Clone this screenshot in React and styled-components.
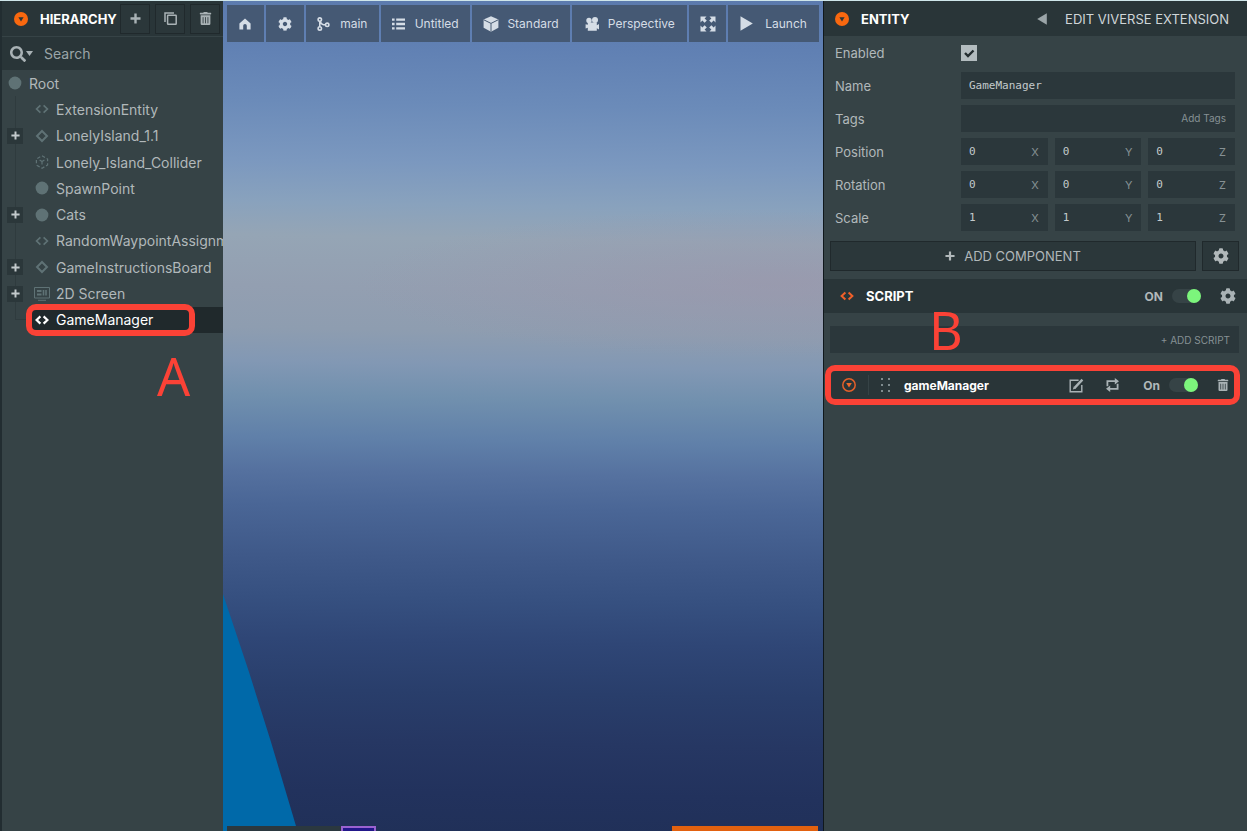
import React from 'react';
import styled, { createGlobalStyle } from 'styled-components';
import { FaCog, FaSearch, FaTrashAlt } from 'react-icons/fa';

const GlobalStyle = createGlobalStyle`
  * { box-sizing: border-box; }
  body {
    margin: 0;
    background: #364346;
    color: #b1b8ba;
    font-family: Inter, "Liberation Sans", sans-serif;
    font-size: 13px;
  }
  button, input {
    margin: 0;
    padding: 0;
    border: 0;
    background: none;
    color: inherit;
    font: inherit;
  }
  svg { display: block; flex: none; }
`;

const Editor = styled.div`
  display: grid;
  grid-template-columns: 223px minmax(0, 1fr) 424px;
  min-height: 100vh;
  border-top: 1px solid #cfe6ea;
  overflow: hidden;
`;

/* ---------- shared parts ---------- */

const PanelHeader = styled.header`
  display: flex;
  align-items: center;
  height: ${(p) => (p.$section ? '34px' : '35px')};
  padding: ${(p) => p.$pad};
  background: #293538;
`;

const Title = styled.h2`
  margin: 0 0 0 12px;
  color: #fff;
  font-size: 13px;
  font-weight: 700;
  line-height: 18px;
`;

const Spacer = styled.span`
  flex: 1;
`;

const IconButton = styled.button`
  display: flex;
  align-items: center;
  justify-content: center;
  color: #a9b2b5;
`;

const Callout = styled.div`
  position: absolute;
  top: ${(p) => p.$v};
  bottom: ${(p) => p.$v};
  left: ${(p) => p.$left};
  right: ${(p) => p.$right};
  border: 6px solid #fb4236;
  border-radius: 10px;
  pointer-events: none;
`;

const CalloutLetter = styled.span`
  position: absolute;
  left: ${(p) => p.$left};
  top: ${(p) => p.$top};
  color: #fb4236;
  font-family: "Noto Sans", sans-serif;
  font-size: 52px;
  line-height: 52px;
  pointer-events: none;
`;

/* ---------- icons ---------- */

const FoldIcon = () => (
  <svg width="14" height="14" viewBox="0 0 14 14">
    <circle cx="7" cy="7" r="7" fill="#f9680f" />
    <path d="M4.4 5.2h5.2L7 9.4z" fill="#293538" />
  </svg>
);

const FoldOutlineIcon = () => (
  <svg width="14" height="14" viewBox="0 0 14 14">
    <circle cx="7" cy="7" r="6.2" fill="none" stroke="#e4602a" strokeWidth="1.5" />
    <path d="M4.2 5.1h5.6L7 9.6z" fill="#f0682a" />
  </svg>
);

const PlusIcon = ({ size = 11 }) => (
  <svg width={size} height={size} viewBox="0 0 11 11">
    <path d="M5.5 0.5v10M0.5 5.5h10" stroke="currentColor" strokeWidth="2.4" />
  </svg>
);

const CopyIcon = () => (
  <svg width="13" height="13" viewBox="0 0 13 13" fill="none" stroke="currentColor" strokeWidth="1.5">
    <rect x="3.6" y="3.2" width="8.6" height="9" rx="0.5" />
    <path d="M1 10V1h9" />
  </svg>
);

const CodeIcon = ({ width = 14, stroke = 1.7 }) => (
  <svg width={width} height="10" viewBox="0 0 14 10" fill="none" stroke="currentColor" strokeWidth={stroke}>
    <path d="M5.4 1.4 1.6 5l3.8 3.6M8.6 1.4 12.4 5 8.6 8.6" />
  </svg>
);

const DiamondIcon = () => (
  <svg width="14" height="14" viewBox="0 0 14 14" fill="none" stroke="currentColor" strokeWidth="2">
    <path d="M7 2 12 7 7 12 2 7z" />
  </svg>
);

const DotIcon = () => (
  <svg width="14" height="14" viewBox="0 0 14 14">
    <circle cx="7" cy="7" r="6.4" fill="currentColor" />
  </svg>
);

const ColliderIcon = () => (
  <svg width="14" height="14" viewBox="0 0 14 14" fill="none" stroke="currentColor" strokeWidth="1.2">
    <path d="M7 0.8 12.6 4v6L7 13.2 1.4 10V4z" strokeDasharray="3.4 2" />
    <path d="M4.6 5 7 6.6 9.4 5M7 6.6v3" />
  </svg>
);

const ScreenIcon = () => (
  <svg width="16" height="14" viewBox="0 0 16 14" fill="none" stroke="currentColor">
    <path d="M0.5 0.5h15v10.5h-15zM4 13.3h8" />
    <path d="M3 4h4.500M3 7.500h4.500" strokeWidth="1.8" />
    <path d="M9.500 3v5.500M12 3v5.500" strokeWidth="1.6" />
  </svg>
);

const HomeIcon = () => (
  <svg width="12" height="12" viewBox="0 0 12 12">
    <path d="M6 0.4 11.6 5.6V11.4H7.8V7.8a1.8 1.8 0 0 0-3.6 0v3.6H0.4V5.6z" fill="currentColor" />
  </svg>
);

const BranchIcon = () => (
  <svg width="13" height="14" viewBox="0 0 13 14" fill="none" stroke="currentColor" strokeWidth="1.6">
    <circle cx="2.8" cy="2.6" r="1.7" />
    <circle cx="2.8" cy="11.4" r="1.7" />
    <circle cx="10.2" cy="7.8" r="1.7" />
    <path d="M2.8 4.3v5.4M3.2 4.4c.8 2.4 2.6 3.4 5.2 3.4" />
  </svg>
);

const ListIcon = () => (
  <svg width="13" height="12" viewBox="0 0 13 12" stroke="currentColor" strokeWidth="2.4">
    <path d="M0 1.6h2.6M4.2 1.6H13M0 6h2.6M4.2 6H13M0 10.4h2.6M4.2 10.4H13" />
  </svg>
);

const CubeIcon = () => (
  <svg width="16" height="16" viewBox="0 0 16 16">
    <path d="M8 0.3 15.4 3.6v8.2L8 15.8 0.6 11.8V3.6z" fill="currentColor" />
    <path d="M0.8 3.8 8 7.4l7.2-3.6M8 7.4v8.2" fill="none" stroke="#475a72" strokeWidth="1" />
  </svg>
);

const CameraIcon = () => (
  <svg width="15" height="14" viewBox="0 0 15 14" fill="currentColor">
    <circle cx="4" cy="3.4" r="2.7" />
    <circle cx="10" cy="3" r="3" />
    <path d="M2.8 5.6h9v2.6l2.2-1.2v5.4l-2.2-1.2v2.6H2.8V10.8L0.6 11.4V7.2l2.2.6z" />
  </svg>
);

const ExpandIcon = () => (
  <svg width="16" height="16" viewBox="0 0 16 16" fill="currentColor">
    <path d="M0.5 0.5h6L4.6 2.4l2.2 2.2-2.2 2.2-2.2-2.2L0.5 6.5zM15.5 0.5v6l-1.9-1.9-2.2 2.2-2.2-2.2 2.2-2.2L9.5 0.5zM0.5 15.5v-6l1.9 1.9 2.2-2.2 2.2 2.2-2.2 2.2 1.9 1.9zM15.5 15.5h-6l1.9-1.9-2.2-2.2 2.2-2.2 2.2 2.2 1.9-1.9z" />
  </svg>
);

const PlayIcon = () => (
  <svg width="13" height="15" viewBox="0 0 13 15">
    <path d="M0.5 0.3 12.8 7.5 0.5 14.7z" fill="currentColor" />
  </svg>
);

const BackIcon = () => (
  <svg width="10" height="12" viewBox="0 0 10 12">
    <path d="M9.8 0.3v11.4L0.2 6z" fill="currentColor" />
  </svg>
);

const CaretIcon = () => (
  <svg width="7" height="5" viewBox="0 0 7 5">
    <path d="M0 0h7L3.5 5z" fill="currentColor" />
  </svg>
);

const EditIcon = () => (
  <svg width="15" height="15" viewBox="0 0 15 15" fill="none" stroke="currentColor" strokeWidth="1.4">
    <path d="M9.6 2.2H1.2v11.6h11.6V7" />
    <path d="M5.6 9.8 13.4 1.6" strokeWidth="2.4" />
    <path d="M3.8 11.6 7 10.6 4.8 8.6z" fill="currentColor" stroke="none" />
  </svg>
);

const RefreshIcon = () => (
  <svg width="15" height="14" viewBox="0 0 15 14" fill="none" stroke="currentColor" strokeWidth="1.8">
    <path d="M2.4 8.2V3.2h8M12.6 5.8v5H4.6" />
    <path d="M9.8 0 14 3.2 9.8 6.4zM5.2 7.6 1 10.8l4.2 3.2z" fill="currentColor" stroke="none" />
  </svg>
);

const GripIcon = () => (
  <svg width="10" height="14" viewBox="0 0 10 14" fill="#7f8b8e">
    <path d="M0 0h2v2H0zM7 0h2v2H7zM0 6h2v2H0zM7 6h2v2H7zM0 12h2v2H0zM7 12h2v2H7z" />
  </svg>
);

/* ---------- hierarchy ---------- */

const Hierarchy = styled.aside`
  position: relative;
  display: flex;
  flex-direction: column;
  min-width: 0;
  overflow: hidden;
  border-left: 2px solid #222d31;
  background: #364346;
`;

const HeaderButtons = styled.div`
  display: flex;
  gap: 5px;
  margin-left: auto;
`;

const HeaderButton = styled(IconButton)`
  width: 30px;
  height: 30px;
  border: 1px solid #20292c;
  background: #2b373a;
`;

const SearchBar = styled.label`
  display: flex;
  align-items: center;
  height: 34px;
  padding: 0 8px;
  border-top: 1px solid #364346;
  background: #293538;
  color: #a9b2b5;

  input {
    flex: 1;
    min-width: 0;
    margin-left: 11px;
    outline: 0;
    font-size: 14px;
  }
  input::placeholder {
    color: #9ba5a8;
    opacity: 1;
  }
`;

const Tree = styled.ul`
  position: relative;
  display: grid;
  grid-template-columns: minmax(0, 1fr);
  grid-auto-rows: 1fr;
  height: 263px;
  margin: 0;
  padding: 0;
  list-style: none;

  &::before {
    content: "";
    position: absolute;
    top: 26px;
    bottom: 13px;
    left: 13px;
    width: 15px;
    border-left: 1px solid #2f3b3e;
    border-bottom: 1px solid #2f3b3e;
  }
`;

const TreeRow = styled.li`
  position: relative;
  display: flex;
  align-items: center;
  gap: 7px;
  padding-left: 5px;
  color: #b1b8ba;
  font-size: 14px;
  white-space: nowrap;
`;

const SelectedRow = styled(TreeRow)`
  margin-left: 28px;
  padding-left: 4px;
  background: #20292c;
  color: #fff;
`;

const NodeIcon = styled.span`
  display: flex;
  flex: none;
  justify-content: center;
  width: 15px;
  color: ${(p) => (p.$selected ? '#fff' : '#5f7275')};
`;

const ExpanderSlot = styled.span`
  flex: none;
  width: 20px;
`;

const Expander = styled(IconButton)`
  width: 16px;
  height: 16px;
  background: #2b373a;
  color: #c3cacc;
`;

const nodes = [
  { name: 'ExtensionEntity', icon: <CodeIcon /> },
  { name: 'LonelyIsland_1.1', icon: <DiamondIcon />, open: true },
  { name: 'Lonely_Island_Collider', icon: <ColliderIcon /> },
  { name: 'SpawnPoint', icon: <DotIcon /> },
  { name: 'Cats', icon: <DotIcon />, open: true },
  { name: 'RandomWaypointAssignment', icon: <CodeIcon /> },
  { name: 'GameInstructionsBoard', icon: <DiamondIcon />, open: true },
  { name: '2D Screen', icon: <ScreenIcon />, open: true },
];

/* ---------- viewport ---------- */

const Viewport = styled.main`
  position: relative;
  display: flex;
  flex-direction: column;
  justify-content: space-between;
  min-width: 0;
  overflow: hidden;
  background:
    radial-gradient(ellipse 70% 9% at 92% 34%, rgba(158, 148, 170, 0.5), transparent),
    linear-gradient(
      181deg,
      #5b7aad 0%, #6080b3 6%, #6b8bb9 13%, #7b98bf 20%, #89a2bd 25%,
      #95a5b5 29%, #939fb1 35%, #8e9db0 40%, #8298b4 44%, #7190ae 48%,
      #6080a9 53%, #55719f 57%, #4a6696 61%, #3f5989 67%, #365080 72%,
      #2f4676 77%, #293e6b 83%, #263763 89%, #22325d 95%, #203058 100%
    );
`;

const Toolbar = styled.nav`
  position: relative;
  display: flex;
  gap: 2px;
  padding: 4px;
`;

const ToolButton = styled.button`
  display: flex;
  flex: ${(p) => p.$w} 1 ${(p) => p.$w}px;
  align-items: center;
  justify-content: center;
  gap: ${(p) => p.$gap || 8}px;
  height: 37px;
  min-width: 0;
  background: #455974;
  color: #d5dde6;
  font-size: 12px;
  white-space: nowrap;
`;

const Ramp = styled.svg`
  position: absolute;
  left: 0;
  bottom: 0;
`;

const BottomEdge = styled.div`
  position: relative;
  display: flex;
  height: 5px;
  padding: 0 5px 0 4px;
`;

const BottomPanel = styled.span`
  width: 114px;
  background: #2b383f;
`;

const BottomTab = styled.span`
  width: 35px;
  border: 2px solid #9a62d0;
  border-bottom: 0;
  background: #22178a;
`;

const BottomAction = styled.span`
  width: 146px;
  margin-left: auto;
  background: #e2610f;
`;

/* ---------- inspector ---------- */

const Inspector = styled.aside`
  min-width: 0;
  border-left: 1px solid #10181c;
  background: #364346;
`;

const HeaderLink = styled.button`
  display: flex;
  align-items: center;
  gap: 18px;
  color: #d0d6d8;
  svg { color: #9ba5a8; }
`;

const Fields = styled.div`
  display: grid;
  gap: 6px;
  padding: 3px 12px 10px 11px;
`;

const FieldRow = styled.div`
  display: grid;
  grid-template-columns: 120px minmax(0, 1fr);
  column-gap: 6px;
  align-items: center;
  height: 27px;
`;

const Inputs = styled.div`
  display: flex;
  gap: 7px;
`;

const InputBox = styled.label`
  display: flex;
  flex: 1;
  align-items: center;
  min-width: 0;
  height: 27px;
  padding: 0 9px 0 8px;
  background: #2b373b;
  color: #869194;
  font-size: 11px;

  input {
    flex: 1;
    min-width: 0;
    width: 0;
    outline: 0;
    color: #c3cacc;
    font-family: "DejaVu Sans Mono", monospace;
    font-size: 11px;
  }
  input::placeholder {
    color: #869194;
    font-family: Inter, sans-serif;
    font-size: 10px;
    text-align: right;
    opacity: 1;
  }
`;

const Checkbox = styled.input`
  width: 16px;
  height: 16px;
  appearance: none;
  background: #b3bcbf url("data:image/svg+xml,%3Csvg xmlns='http://www.w3.org/2000/svg' viewBox='0 0 16 16'%3E%3Cpath d='M4 8l3 3 5.5-5.5' fill='none' stroke='%23222c2f' stroke-width='2.4'/%3E%3C/svg%3E");
`;

const Actions = styled.div`
  display: flex;
  gap: 6px;
  padding: 0 8px 8px 6px;
`;

const ActionButton = styled(IconButton)`
  flex: ${(p) => (p.$wide ? '1' : '0 0 37px')};
  gap: 9px;
  height: 30px;
  border: 1px solid #20292c;
  background: #2b373a;
  color: #b1b8ba;
`;

const ScriptSection = styled.section`
  position: relative;
`;

const ScriptBadge = styled.span`
  color: #f0602a;
`;

const AddScript = styled.button`
  display: block;
  width: calc(100% - 14px);
  height: 27px;
  margin: 13px 8px 18px 6px;
  padding: 0 9px;
  background: #2b373b;
  color: #869194;
  font-size: 10px;
  text-align: right;
`;

const ScriptItem = styled.div`
  position: relative;
  display: flex;
  align-items: center;
  height: 28px;
  margin: 0 8px 0 6px;
  padding: 0 10px 0 12px;
  background: #293538;
`;

const ScriptName = styled.strong`
  margin-left: 13px;
  color: #fff;
  font-size: 12px;
`;

const Divider = styled.span`
  width: 1px;
  height: 20px;
  margin: 0 12px;
  background: #364346;
`;

const ScriptTools = styled.div`
  display: flex;
  gap: 21px;
  margin-right: 23px;
`;

const Switch = styled.label`
  display: flex;
  align-items: center;
  gap: 9px;
  margin-right: 19px;
  color: #b1b8ba;
  font-size: 12px;
  font-weight: 700;

  input {
    display: flex;
    align-items: center;
    justify-content: flex-end;
    width: 29px;
    height: 14px;
    border-radius: 7px;
    appearance: none;
    background: #364346;
  }
  input::after {
    content: "";
    width: 14px;
    height: 14px;
    border-radius: 7px;
    background: #7cf57c;
  }
`;

const Vector = ({ label, value }) => (
  <FieldRow role="group" aria-label={label}>
    <span>{label}</span>
    <Inputs>
      {['X', 'Y', 'Z'].map((axis) => (
        <InputBox key={axis}>
          <input defaultValue={value} />
          {axis}
        </InputBox>
      ))}
    </Inputs>
  </FieldRow>
);

export default function App() {
  return (
    <>
      <GlobalStyle />
      <Editor>
        <Hierarchy>
          <PanelHeader $pad="0 3px 0 12px">
            <FoldIcon />
            <Title>HIERARCHY</Title>
            <HeaderButtons>
              <HeaderButton aria-label="Add"><PlusIcon /></HeaderButton>
              <HeaderButton aria-label="Duplicate"><CopyIcon /></HeaderButton>
              <HeaderButton aria-label="Delete"><FaTrashAlt size={13} /></HeaderButton>
            </HeaderButtons>
          </PanelHeader>
          <SearchBar>
            <FaSearch size={16} />
            <CaretIcon />
            <input placeholder="Search" aria-label="Search" />
          </SearchBar>
          <Tree>
            <TreeRow>
              <NodeIcon><DotIcon /></NodeIcon>
              <span>Root</span>
            </TreeRow>
            {nodes.map((node) => (
              <TreeRow key={node.name}>
                <ExpanderSlot>
                  {node.open && (
                    <Expander aria-label={`Expand ${node.name}`}><PlusIcon size={9} /></Expander>
                  )}
                </ExpanderSlot>
                <NodeIcon>{node.icon}</NodeIcon>
                <span>{node.name}</span>
              </TreeRow>
            ))}
            <SelectedRow>
              <NodeIcon $selected><CodeIcon stroke={2.2} /></NodeIcon>
              <span>GameManager</span>
              <Callout $v="-3px" $left="-4px" $right="28px" />
            </SelectedRow>
          </Tree>
          <CalloutLetter $left="155px" $top="349px">A</CalloutLetter>
        </Hierarchy>

        <Viewport>
          <Ramp width="73" height="237" viewBox="0 0 73 237">
            <path d="M0 0 L26 78 L48 148 L73 232 H4 V237 H0z" fill="#0069a9" />
          </Ramp>
          <Toolbar>
            <ToolButton $w={37} aria-label="Home"><HomeIcon /></ToolButton>
            <ToolButton $w={38} aria-label="Settings"><FaCog size={14} /></ToolButton>
            <ToolButton $w={73} $gap={10}><BranchIcon />main</ToolButton>
            <ToolButton $w={89} $gap={10}><ListIcon />Untitled</ToolButton>
            <ToolButton $w={99}><CubeIcon />Standard</ToolButton>
            <ToolButton $w={115}><CameraIcon />Perspective</ToolButton>
            <ToolButton $w={37} aria-label="Full screen"><ExpandIcon /></ToolButton>
            <ToolButton $w={91} $gap={12}><PlayIcon />Launch</ToolButton>
          </Toolbar>
          <BottomEdge>
            <BottomPanel />
            <BottomTab />
            <BottomAction />
          </BottomEdge>
        </Viewport>

        <Inspector>
          <PanelHeader $pad="0 18px 0 11px">
            <FoldIcon />
            <Title>ENTITY</Title>
            <Spacer />
            <HeaderLink><BackIcon />EDIT VIVERSE EXTENSION</HeaderLink>
          </PanelHeader>
          <Fields>
            <FieldRow>
              <label htmlFor="enabled">Enabled</label>
              <Checkbox id="enabled" type="checkbox" defaultChecked />
            </FieldRow>
            <FieldRow>
              <label htmlFor="name">Name</label>
              <InputBox as="div"><input id="name" defaultValue="GameManager" /></InputBox>
            </FieldRow>
            <FieldRow>
              <label htmlFor="tags">Tags</label>
              <InputBox as="div"><input id="tags" placeholder="Add Tags" /></InputBox>
            </FieldRow>
            <Vector label="Position" value="0" />
            <Vector label="Rotation" value="0" />
            <Vector label="Scale" value="1" />
          </Fields>
          <Actions>
            <ActionButton $wide><PlusIcon size={10} />ADD COMPONENT</ActionButton>
            <ActionButton aria-label="Component settings"><FaCog size={16} /></ActionButton>
          </Actions>
          <ScriptSection>
            <PanelHeader $section $pad="0 11px 0 16px">
              <ScriptBadge><CodeIcon stroke={2} /></ScriptBadge>
              <Title>SCRIPT</Title>
              <Spacer />
              <Switch>ON<input type="checkbox" role="switch" defaultChecked /></Switch>
              <IconButton aria-label="Script settings"><FaCog size={16} /></IconButton>
            </PanelHeader>
            <AddScript>+ ADD SCRIPT</AddScript>
            <ScriptItem>
              <FoldOutlineIcon />
              <Divider />
              <GripIcon />
              <ScriptName>gameManager</ScriptName>
              <Spacer />
              <ScriptTools>
                <IconButton aria-label="Edit"><EditIcon /></IconButton>
                <IconButton aria-label="Parse"><RefreshIcon /></IconButton>
              </ScriptTools>
              <Switch>On<input type="checkbox" role="switch" defaultChecked /></Switch>
              <IconButton aria-label="Remove script"><FaTrashAlt size={12} /></IconButton>
              <Callout $v="-6px" $left="-5px" $right="-1px" />
            </ScriptItem>
            <CalloutLetter $left="105px" $top="25px">B</CalloutLetter>
          </ScriptSection>
        </Inspector>
      </Editor>
    </>
  );
}
